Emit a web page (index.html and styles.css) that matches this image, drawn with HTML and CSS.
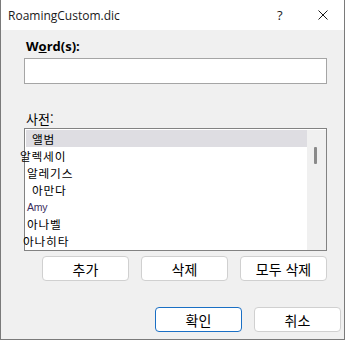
FILE: index.html
```html
<!DOCTYPE html>
<html lang="ko">
<head>
    <meta charset="UTF-8">
    <title>RoamingCustom.dic</title>
    <link rel="stylesheet" href="styles.css">
</head>
<body>
    <div class="window">
        <div class="titlebar">
            <span class="title">RoamingCustom.dic</span>
            <span class="help">?</span>
            <span class="close">
                <svg width="10" height="10" viewBox="0 0 10 10">
                    <path d="M0.5 0.5 L9.5 9.5 M9.5 0.5 L0.5 9.5" stroke="#1a1a1a" stroke-width="1" fill="none"/>
                </svg>
            </span>
        </div>

        <div class="content">
            <label class="word-label">W<u>o</u>rd(s):</label>
            <input type="text" class="word-input">

            <div class="dict-label">사전:</div>
            <div class="listbox">
                <div class="items">
                    <div class="item selected off-32">앨범</div>
                    <div class="item off-20">알렉세이</div>
                    <div class="item off-27">알레기스</div>
                    <div class="item off-32">아만다</div>
                    <div class="item latin off-27">Amy</div>
                    <div class="item off-27">아나벨</div>
                    <div class="item off-23">아나히타</div>
                </div>
                <div class="scrollbar">
                    <div class="thumb"></div>
                </div>
            </div>

            <div class="actions">
                <button>추가</button>
                <button>삭제</button>
                <button>모두 삭제</button>
            </div>
        </div>

        <div class="footer">
            <button class="default">확인</button>
            <button>취소</button>
        </div>
    </div>
</body>
</html>
```

FILE: styles.css
```css
* {
    margin: 0;
    padding: 0;
    box-sizing: border-box;
}

body {
    background-color: #f0f0f0;
    font-family: 'Noto Sans CJK KR', 'Noto Sans', sans-serif;
    color: #000;
}

.window {
    width: 345px;
    height: 340px;
    border: 1px solid #7a7a7a;
    border-top: none;
    background-color: #f0f0f0;
    display: flex;
    flex-direction: column;
}

.titlebar {
    height: 30px;
    background-color: #fff;
    display: flex;
    align-items: center;
    padding-left: 7px;
    font-family: 'Open Sans', sans-serif;
    font-size: 12px;
    color: #1a1a1a;
}

.title {
    flex: 1;
}

.help {
    width: 12px;
    margin-right: 29px;
    font-size: 13px;
}

.close {
    width: 10px;
    height: 10px;
    margin-right: 16px;
    display: flex;
}

.content {
    padding: 7px 17px 0 23px;
    display: flex;
    flex-direction: column;
}

.word-label {
    font-family: 'Open Sans', sans-serif;
    font-weight: bold;
    font-size: 13px;
    line-height: 18px;
    height: 18px;
    padding-left: 2px;
}

.word-input {
    margin-top: 3px;
    width: 303px;
    height: 26px;
    border: 1px solid #a5a5a5;
    background: #fff;
    outline: none;
}

.dict-label {
    margin-top: 25px;
    height: 19px;
    font-size: 13px;
    line-height: 19px;
    padding-left: 2px;
}

.listbox {
    width: 303px;
    height: 123px;
    border: 1px solid #828282;
    background: #fff;
    padding: 1px 0 0 1px;
    display: flex;
}

.items {
    width: 281px;
}

.item {
    height: 17px;
    line-height: 17px;
    font-size: 11.7px;
    letter-spacing: 0.8px;
    white-space: nowrap;
}

.item.selected {
    background-color: #dedde2;
}

.item.latin {
    font-family: 'Liberation Sans', sans-serif;
    font-size: 10.5px;
    letter-spacing: -0.3px;
    color: #3a2d5c;
    line-height: 18px;
}

.off-32 { padding-left: 6px; }
.off-27 { padding-left: 1px; }
.off-23 { margin-left: -3px; }
.off-20 { margin-left: -6px; }

.scrollbar {
    width: 19px;
    height: 120px;
    background-color: #f0f0f0;
    padding: 17px 0 0 7px;
}

.thumb {
    width: 3px;
    height: 17px;
    background-color: #8a8a8a;
    border-radius: 1px;
}

button {
    width: 87px;
    height: 25px;
    background-color: #fff;
    border: 1px solid #d0d0d0;
    border-radius: 4px;
    font-family: 'Noto Sans CJK KR', sans-serif;
    font-size: 14px;
    color: #000;
}

.actions {
    margin-top: 5px;
    display: flex;
    justify-content: flex-end;
    gap: 12px;
}

.footer {
    margin-top: 26px;
    padding-right: 3px;
    display: flex;
    justify-content: flex-end;
    gap: 12px;
}

button.default {
    border: 1.5px solid #1a6fc4;
}
```
